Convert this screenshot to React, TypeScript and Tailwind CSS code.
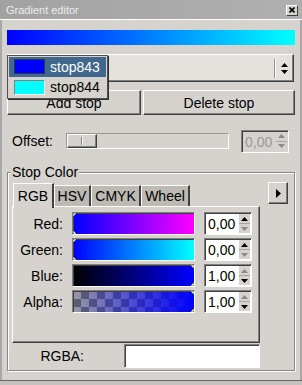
import React from "react";

const raised =
  "border border-t-white border-l-white border-r-[#404040] border-b-[#404040] shadow-[inset_-1px_-1px_0_#808080]";
const sunken =
  "border border-t-[#808080] border-l-[#808080] border-r-white border-b-white shadow-[inset_1px_1px_0_#404040]";

function Arrow({ dir, color }: { dir: "up" | "down" | "right"; color: string }) {
  if (dir === "up")
    return (
      <svg width="7" height="4" viewBox="0 0 7 4">
        <path d="M3.5 0L7 4H0Z" fill={color} />
      </svg>
    );
  if (dir === "down")
    return (
      <svg width="7" height="4" viewBox="0 0 7 4">
        <path d="M0 0H7L3.5 4Z" fill={color} />
      </svg>
    );
  return (
    <svg width="5" height="9" viewBox="0 0 5 9">
      <path d="M0 0L5 4.5L0 9Z" fill={color} />
    </svg>
  );
}

function Spin({
  value,
  up,
  down,
  disabled,
}: {
  value: string;
  up: boolean;
  down: boolean;
  disabled?: boolean;
}) {
  return (
    <div
      className={`flex w-[48px] h-[23px] ${sunken} ${
        disabled ? "bg-[#d6d3ce] text-[#9a9894]" : "bg-white text-black"
      }`}
    >
      <div className="flex-1 flex items-center pl-[3px] pt-px">{value}</div>
      <div className="w-[12px] flex flex-col py-px pr-px">
        <div className="flex-1 flex items-center justify-center bg-[#d6d3ce] border-b border-[#a8a5a0]">
          <Arrow dir="up" color={up ? "#000" : "#8a8a8a"} />
        </div>
        <div className="flex-1 flex items-center justify-center bg-[#d6d3ce]">
          <Arrow dir="down" color={down ? "#000" : "#8a8a8a"} />
        </div>
      </div>
    </div>
  );
}

function Marker({ corner }: { corner: "tl" | "bl" | "tr" | "br" }) {
  const pos =
    corner === "tl"
      ? "top-0 left-0"
      : corner === "bl"
      ? "bottom-0 left-0"
      : corner === "tr"
      ? "top-0 right-0"
      : "bottom-0 right-0";
  const d =
    corner === "tl"
      ? "M0 0H4L0 4Z"
      : corner === "bl"
      ? "M0 5V1L4 5Z"
      : corner === "tr"
      ? "M5 0H1L5 4Z"
      : "M5 5V1L1 5Z";
  return (
    <svg className={`absolute ${pos}`} width="5" height="5" viewBox="0 0 5 5">
      <path d={d} fill="#ffffff" stroke="#000" strokeWidth="0.6" />
    </svg>
  );
}

function Bar({ bg, at }: { bg: string; at: "left" | "right" }) {
  return (
    <div className={`relative w-[123px] h-[23px] ${sunken} ${bg}`}>
      {at === "left" ? (
        <>
          <Marker corner="tl" />
          <Marker corner="bl" />
        </>
      ) : (
        <>
          <Marker corner="tr" />
          <Marker corner="br" />
        </>
      )}
    </div>
  );
}

function Row({
  label,
  bg,
  at,
  value,
  up,
  down,
}: {
  label: string;
  bg: string;
  at: "left" | "right";
  value: string;
  up: boolean;
  down: boolean;
}) {
  return (
    <div className="flex items-center h-[23px]">
      <div className="w-[50px] text-right">{label}</div>
      <div className="ml-[9px]">
        <Bar bg={bg} at={at} />
      </div>
      <div className="ml-[9px]">
        <Spin value={value} up={up} down={down} />
      </div>
    </div>
  );
}

export default function App() {
  return (
    <div className="relative w-[302px] h-[385px] bg-[#c4c2be] overflow-hidden font-['Liberation_Sans',Arial,sans-serif] text-[14px] leading-[16px] text-black">
      <div className="w-[302px] h-[381px] bg-[#d6d3ce] border-b border-[#6a6a6a] flex flex-col">
        {/* title bar */}
        <div className="h-[19px] bg-[linear-gradient(to_right,#a2a2a2,#b0b0b0)] flex items-center pl-[6px] pr-[4px] text-[11px] text-[#ececec]">
          <span className="flex-1">Gradient editor</span>
          <div className="w-[12px] h-[11px] mt-px bg-[#d6d3ce] border border-t-white border-l-white border-r-[#404040] border-b-[#404040] flex items-center justify-center">
            <svg width="6" height="6" viewBox="0 0 6 6">
              <path d="M0.5 0.5L5.5 5.5M5.5 0.5L0.5 5.5" stroke="#000" strokeWidth="1.6" />
            </svg>
          </div>
        </div>
        <div className="h-px bg-white" />

        <div className="flex-1 flex flex-col border-x-[2px] border-[#a8a8a8] pl-[5px]">
          {/* gradient preview */}
          <div className="mt-[10px] w-[288px] h-[15px] bg-[linear-gradient(to_right,#0000ff,#00ffff)]" />

          {/* combo */}
          <div className={`mt-[9px] w-[287px] h-[28px] bg-[#e4e2dd] ${raised} flex items-center justify-end`}>
            <div className="w-px h-[19px] bg-[#909090] border-r border-white box-content" />
            <div className="w-[17px] flex flex-col items-center gap-[3px]">
              <Arrow dir="up" color="#000" />
              <Arrow dir="down" color="#000" />
            </div>
          </div>

          {/* buttons */}
          <div className="mt-[8px] flex gap-[2px]">
            <div className={`w-[134px] h-[25px] ${raised} flex items-center justify-center`}>
              Add stop
            </div>
            <div className={`w-[152px] h-[25px] ${raised} flex items-center justify-center`}>
              Delete stop
            </div>
          </div>

          {/* offset */}
          <div className="mt-[15px] h-[22px] flex items-center">
            <span className="ml-[5px] w-[54px]">Offset:</span>
            <div className="w-[163px] h-[16px] border border-t-[#9a9894] border-l-[#9a9894] border-r-white border-b-white flex items-center">
              <div className={`w-[30px] h-[14px] ${raised} bg-[#d6d3ce] flex items-center justify-center`}>
                <div className="w-px h-[8px] bg-[#808080] border-r border-white box-content" />
              </div>
            </div>
            <div className="ml-[12px]">
              <Spin value="0,00" up={false} down={false} disabled />
            </div>
          </div>

          {/* Stop color frame */}
          <div className="relative mt-[20px] w-[288px] h-[199px] border border-[#8a8884] shadow-[inset_1px_1px_0_#ffffff,1px_1px_0_#ffffff] pl-[4px]">
            <span className="absolute left-[3px] top-[-9px] px-px bg-[#d6d3ce]">Stop Color</span>

            <div className="mt-[9px] flex items-start">
              {/* notebook */}
              <div className="w-[248px] pt-px">
                <div className="flex items-end h-[23px] pl-px">
                  <div className="relative z-10 w-[41px] h-[25px] mb-[-2px] bg-[#d6d3ce] border-t border-l border-white border-r-[2px] border-r-[#404040] flex items-start justify-center pt-[4px]">
                    RGB
                  </div>
                  <div className="w-[37px] h-[21px] bg-[#bdbab3] border-t border-l border-white border-r-[2px] border-r-[#404040] flex items-center justify-center">
                    HSV
                  </div>
                  <div className="w-[50px] h-[21px] bg-[#bdbab3] border-t border-l border-white border-r-[2px] border-r-[#404040] flex items-center justify-center">
                    CMYK
                  </div>
                  <div className="w-[49px] h-[21px] bg-[#bdbab3] border-t border-l border-white border-r-[2px] border-r-[#404040] flex items-center justify-center">
                    Wheel
                  </div>
                </div>
                <div className="relative w-[248px] h-[137px] border border-t-white border-l-white border-r-[#404040] border-b-[#404040] shadow-[inset_-1px_-1px_0_#808080] pt-[5px] flex flex-col gap-[3px]">
                  <Row
                    label="Red:"
                    bg="bg-[linear-gradient(to_right,#0000ff,#ff00ff)]"
                    at="left"
                    value="0,00"
                    up
                    down={false}
                  />
                  <Row
                    label="Green:"
                    bg="bg-[linear-gradient(to_right,#0000ff,#00ffff)]"
                    at="left"
                    value="0,00"
                    up
                    down={false}
                  />
                  <Row
                    label="Blue:"
                    bg="bg-[linear-gradient(to_right,#000000,#0000ff)]"
                    at="right"
                    value="1,00"
                    up={false}
                    down
                  />
                  <Row
                    label="Alpha:"
                    bg="bg-[image:linear-gradient(to_right,rgba(0,0,255,0.05),#0000ff),conic-gradient(#666666_25%,#a0a0a0_0_50%,#666666_0_75%,#a0a0a0_0)] bg-[length:100%_100%,16px_16px]"
                    at="right"
                    value="1,00"
                    up={false}
                    down
                  />
                </div>
              </div>
              <div className={`ml-[8px] w-[20px] h-[22px] ${raised} flex items-center justify-center`}>
                <Arrow dir="right" color="#000" />
              </div>
            </div>

            {/* RGBA */}
            <div className="mt-px flex items-center h-[24px]">
              <div className="w-[72px] text-right">RGBA:</div>
              <div className={`ml-[40px] w-[136px] h-[24px] bg-white ${sunken}`} />
            </div>
          </div>
        </div>
      </div>

      {/* dropdown popup */}
      <div className="absolute left-[7px] top-[55px] w-[101px] h-[44px] bg-[#d6d3ce] border border-[#505050] shadow-[1px_1px_0_#303030] p-px flex flex-col">
        <div className="h-[20px] bg-[#41678c] flex items-center pl-[5px] text-white">
          <div className="w-[31px] h-[15px] bg-[#0000ff] border border-[#26384a] mr-[5px]" />
          stop843
        </div>
        <div className="h-[20px] flex items-center pl-[5px] mt-px">
          <div className="w-[31px] h-[15px] bg-[#00ffff] border border-t-[#808080] border-l-[#808080] border-r-white border-b-white mr-[5px]" />
          stop844
        </div>
      </div>
    </div>
  );
}
